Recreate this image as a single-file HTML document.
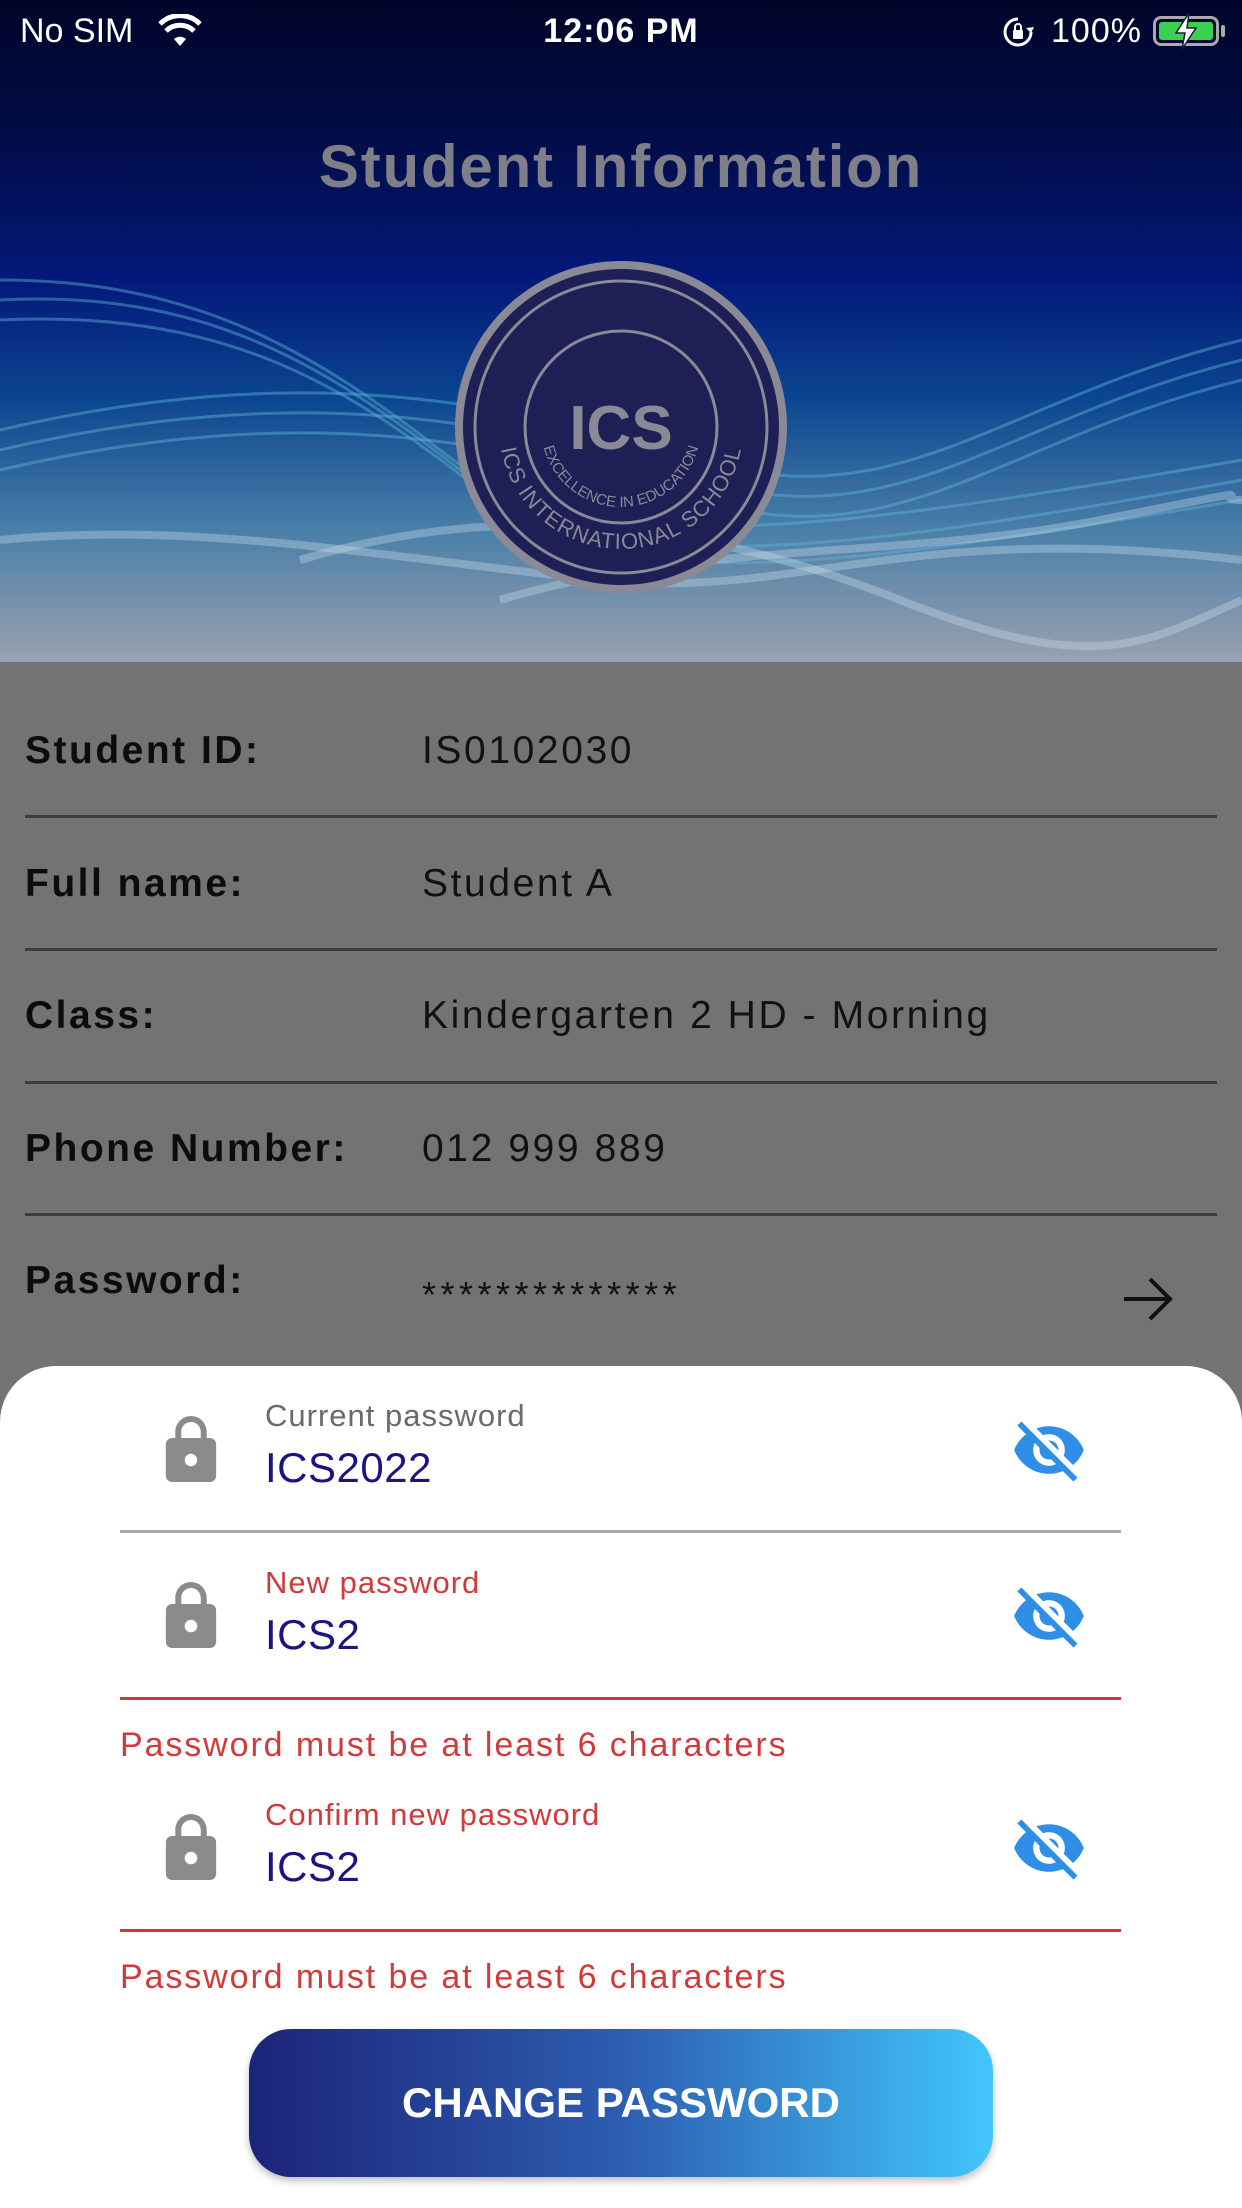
<!DOCTYPE html>
<html><head><meta charset="utf-8"><style>
*{margin:0;padding:0;box-sizing:border-box}
html,body{width:1242px;height:2208px;overflow:hidden;background:#737373;font-family:"Liberation Sans",sans-serif}
.abs{position:absolute}
.hdr{left:0;top:0;width:1242px;height:662px;background:linear-gradient(180deg,#01052a 0%,#020c45 20%,#03187a 42%,#0b4590 60%,#4a7fa8 80%,#9aa0b0 100%);overflow:hidden}
.sb{color:#fff;font-size:34px;top:12px}
.row{left:25px;width:1192px;height:133px;border-bottom:3px solid #3c3c3c}
.lbl{position:absolute;left:0;font-weight:bold;font-size:39px;color:#0c0c0c;letter-spacing:2.5px}
.val{position:absolute;left:397px;font-size:39px;color:#111;letter-spacing:2.6px}
.sheet{left:0;top:1366px;width:1242px;height:842px;background:#fff;border-radius:56px 56px 0 0}
.flab{position:absolute;left:265px;font-size:31px;letter-spacing:1px}
.fval{position:absolute;left:265px;font-size:42px;color:#1c1480;letter-spacing:.5px}
.line{position:absolute;left:120px;width:1001px;height:3px}
.err{position:absolute;left:120px;font-size:34px;color:#d13a3a;letter-spacing:1.9px}
.lock{position:absolute;left:162px;width:58px;height:66px}
.eye{position:absolute;left:1011px;width:76px;height:76px}
</style></head><body>
<div class="abs hdr">
<svg width="1242" height="662" style="position:absolute;left:0;top:0" fill="none">
<g stroke="#5fb4d8" stroke-opacity=".45" stroke-width="3">
<path d="M0 300 C200 290 320 360 460 470 S800 560 1242 480"/>
<path d="M0 320 C220 310 340 380 480 490 S820 570 1242 500"/>
<path d="M0 280 C180 280 300 340 440 450 S780 540 1242 460"/>
<path d="M0 450 C300 380 500 420 700 480 S1000 420 1242 360"/>
<path d="M0 470 C300 400 500 440 700 500 S1000 440 1242 380"/>
<path d="M0 430 C300 360 500 400 700 460 S1000 400 1242 340"/>
</g>
<g stroke="#cfe0ee" stroke-opacity=".35" stroke-width="8">
<path d="M300 560 C500 500 700 520 900 600 S1150 640 1242 600"/>
<path d="M0 540 C200 520 400 560 600 580 S900 520 1242 560"/>
<path d="M500 600 C700 540 900 560 1100 520 S1200 500 1242 500"/>
</g>
</svg>
<svg width="340" height="340" style="position:absolute;left:451px;top:257px" viewBox="0 0 340 340">
<circle cx="170" cy="170" r="166" fill="#8a8a96"/>
<circle cx="170" cy="170" r="158" fill="#1d1f55"/>
<circle cx="170" cy="170" r="146" fill="none" stroke="#8a8a96" stroke-width="3"/>
<circle cx="170" cy="170" r="96" fill="none" stroke="#8a8a96" stroke-width="3"/>
<text x="170" y="192" text-anchor="middle" font-family="Liberation Sans" font-weight="bold" font-size="62" fill="#8a8a96">ICS</text>
<path id="arc1" d="M48 170 A122 122 0 0 0 292 170" fill="none"/>
<text font-family="Liberation Sans" font-size="22" fill="#8a8a96" letter-spacing="1"><textPath href="#arc1" startOffset="50%" text-anchor="middle">ICS INTERNATIONAL SCHOOL</textPath></text>
<path id="arc2" d="M90 170 A80 80 0 0 0 250 170" fill="none"/>
<text font-family="Liberation Sans" font-size="15" fill="#8a8a96"><textPath href="#arc2" startOffset="50%" text-anchor="middle">EXCELLENCE IN EDUCATION</textPath></text>
</svg>
<div class="abs" style="left:0;width:1242px;top:132px;text-align:center;font-weight:bold;font-size:60px;color:#7e7f88;letter-spacing:1.8px">Student Information</div>
</div>
<div class="abs sb" style="left:20px">No SIM</div>
<svg class="abs" style="left:158px;top:14px" width="44" height="34" viewBox="0 0 44 34"><path d="M22 32 L28 25 A9 9 0 0 0 16 25Z" fill="#fff"/><path d="M8 17 A20 20 0 0 1 36 17" stroke="#fff" stroke-width="5" fill="none"/><path d="M2 10 A28 28 0 0 1 42 10" stroke="#fff" stroke-width="5" fill="none"/></svg>
<div class="abs sb" style="left:0;width:1242px;text-align:center;font-weight:bold;letter-spacing:1px">12:06 PM</div>
<svg class="abs" style="left:1002px;top:16px" width="32" height="32" viewBox="0 0 32 32"><path d="M16 3A13 13 0 1 0 29 16" stroke="#fff" stroke-width="3" fill="none"/><path d="M24 12l5 5 3-6z" fill="#fff"/><rect x="11" y="14" width="10" height="9" rx="1" fill="#fff"/><path d="M13 14v-3a3 3 0 0 1 6 0v3" stroke="#fff" stroke-width="2" fill="none"/></svg>
<div class="abs sb" style="left:1051px;letter-spacing:1px">100%</div>
<div class="abs" style="left:1153px;top:16px;width:66px;height:30px;border:3px solid #aaa;border-radius:8px;padding:3px"><div style="width:100%;height:100%;background:#3ad150;border-radius:3px"></div></div>
<svg class="abs" style="left:1172px;top:12px" width="28" height="38" viewBox="0 0 28 38"><path d="M17 1L4 21h9l-3 16 14-21h-9z" fill="#fff" stroke="#1a1a40" stroke-width="1.5"/></svg>
<div class="abs" style="left:1221px;top:25px;width:4px;height:12px;background:#aaa;border-radius:2px"></div>

<div class="abs row" style="top:685px"><div class="lbl" style="top:44px">Student ID:</div><div class="val" style="top:44px">IS0102030</div></div>
<div class="abs row" style="top:818px"><div class="lbl" style="top:44px">Full name:</div><div class="val" style="top:44px">Student A</div></div>
<div class="abs row" style="top:951px"><div class="lbl" style="top:43px">Class:</div><div class="val" style="top:43px">Kindergarten 2 HD - Morning</div></div>
<div class="abs row" style="top:1083px"><div class="lbl" style="top:44px">Phone Number:</div><div class="val" style="top:44px">012 999 889</div></div>
<div class="abs" style="left:25px;top:1259px;font-weight:bold;font-size:39px;color:#0c0c0c;letter-spacing:2.5px">Password:</div>
<div class="abs" style="left:422px;top:1274px;font-size:36px;color:#111;letter-spacing:4.5px">**************</div>
<svg class="abs" style="left:1122px;top:1276px" width="52" height="46" viewBox="0 0 52 46"><path d="M2 23H48M28 3L48 23L28 43" stroke="#111" stroke-width="4" fill="none"/></svg>

<div class="abs sheet"></div>
<svg width="0" height="0" style="position:absolute"><defs>
<symbol id="lk" viewBox="5 1 14 21"><path d="M18 8h-1V6c0-2.760-2.24-5-5-5S7 3.24 7 6v2H6c-1.1 0-2 .9-2 2v10c0 1.1.9 2 2 2h12c1.1 0 2-.9 2-2V10c0-1.1-.9-2-2-2zm-6 9c-1.1 0-2-.9-2-2s.9-2 2-2 2 .9 2 2-.9 2-2 2zm3.1-9H8.9V6c0-1.71 1.39-3.1 3.1-3.1 1.71 0 3.1 1.39 3.1 3.1v2z" fill="#8b8b8b"/></symbol>
<symbol id="ey" viewBox="0 0 24 24"><path d="M12 7c2.76 0 5 2.24 5 5 0 .65-.13 1.26-.36 1.83l2.92 2.92c1.51-1.26 2.7-2.89 3.43-4.75-1.73-4.39-6-7.5-11-7.5-1.4 0-2.74.25-3.980.7l2.16 2.16C10.740 7.13 11.35 7 12 7zM2 4.27l2.28 2.28.46.46C3.08 8.3 1.78 10.02 1 12c1.73 4.39 6 7.5 11 7.5 1.55 0 3.03-.3 4.38-.84l.42.42L19.73 22 21 20.73 3.27 3 2 4.27zM7.53 9.8l1.55 1.55c-.05.21-.08.43-.08.65 0 1.66 1.34 3 3 3 .22 0 .44-.03.65-.08l1.55 1.55c-.67.33-1.41.53-2.2.53-2.76 0-5-2.24-5-5 0-.79.2-1.53.53-2.2zm4.31-.78l3.15 3.15.02-.16c0-1.66-1.34-3-3-3l-.17.01z" fill="#2f8fe6"/></symbol>
</defs></svg>

<svg class="lock" style="top:1416px"><use href="#lk"/></svg>
<div class="flab" style="top:1398px;color:#6a6a6a">Current password</div>
<div class="fval" style="top:1444px">ICS2022</div>
<svg class="eye" style="top:1412px"><use href="#ey"/></svg>
<div class="line" style="top:1530px;background:#a8a8a8"></div>

<svg class="lock" style="top:1582px"><use href="#lk"/></svg>
<div class="flab" style="top:1565px;color:#d13a3a">New password</div>
<div class="fval" style="top:1611px">ICS2</div>
<svg class="eye" style="top:1578px"><use href="#ey"/></svg>
<div class="line" style="top:1697px;background:#d13a3a"></div>
<div class="err" style="top:1726px">Password must be at least 6 characters</div>

<svg class="lock" style="top:1814px"><use href="#lk"/></svg>
<div class="flab" style="top:1797px;color:#d13a3a">Confirm new password</div>
<div class="fval" style="top:1843px">ICS2</div>
<svg class="eye" style="top:1810px"><use href="#ey"/></svg>
<div class="line" style="top:1929px;background:#d13a3a"></div>
<div class="err" style="top:1958px">Password must be at least 6 characters</div>

<div class="abs" style="left:249px;top:2029px;width:744px;height:148px;border-radius:42px;background:linear-gradient(90deg,#1c2478 0%,#2d5db0 50%,#42c6fb 100%);box-shadow:0 4px 8px rgba(0,0,0,.25);color:#fff;font-weight:bold;font-size:42px;text-align:center;line-height:148px">CHANGE PASSWORD</div>
</body></html>
